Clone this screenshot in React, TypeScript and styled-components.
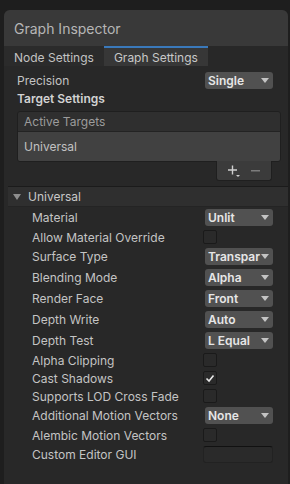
import React from "react";
import styled, { createGlobalStyle } from "styled-components";

const Global = createGlobalStyle`
  html, body {
    margin: 0;
    padding: 0;
    background: #1e1e1e;
    font-family: Inter, "Noto Sans", sans-serif;
  }
`;

const Page = styled.div`
  height: 484px;
  padding: 10px 2px 0 4px;
  box-sizing: border-box;
  overflow: hidden;
`;

const Panel = styled.div`
  height: 474px;
  background: #282828;
  border-radius: 6px 6px 0 0;
  overflow: hidden;
  display: flex;
  flex-direction: column;
`;

const Header = styled.div`
  height: 36px;
  flex: none;
  display: flex;
  align-items: center;
  padding-left: 10px;
  background: #393939;
  color: #b6b6b6;
  font-size: 14px;
`;

const TabBar = styled.div`
  height: 20px;
  flex: none;
  display: flex;
  background: #282828;
`;

const Tab = styled.div<{ $active?: boolean }>`
  display: flex;
  align-items: center;
  padding: 0 10px;
  box-sizing: border-box;
  font-size: 12px;
  color: ${(p) => (p.$active ? "#c8c8c8" : "#c2c2c2")};
  background: ${(p) => (p.$active ? "#373737" : "#2b2b2b")};
  border-top: 2px solid ${(p) => (p.$active ? "#3a79bb" : "transparent")};
`;

const Body = styled.div`
  padding: 5px 0 0 13px;
  display: flex;
  flex-direction: column;
`;

const Row = styled.div<{ $h?: number }>`
  height: ${(p) => p.$h ?? 21}px;
  display: flex;
  align-items: center;
  justify-content: space-between;
  padding-right: 15px;
`;

const Label = styled.span<{ $bold?: boolean }>`
  font-size: 12px;
  color: ${(p) => (p.$bold ? "#d2d2d2" : "#c4c4c4")};
  font-weight: ${(p) => (p.$bold ? 600 : 400)};
  white-space: nowrap;
`;

const SelectBox = styled.div`
  width: 68px;
  height: 17px;
  margin-left: 1px;
  box-sizing: border-box;
  background: #515151;
  border-radius: 3px;
  display: flex;
  align-items: center;
  padding-left: 3px;
  position: relative;
  font-size: 12px;
  font-weight: 600;
  color: #e6e6e6;
`;

const SelectText = styled.span`
  width: 54px;
  overflow: hidden;
  white-space: nowrap;
`;

const Arrow = styled.svg`
  position: absolute;
  right: 4px;
  top: 6px;
`;

const ListBox = styled.div`
  margin-top: 4px;
  width: 264px;
  border: 1px solid #1f1f1f;
  border-radius: 3px;
  box-sizing: border-box;
  overflow: hidden;
`;

const ListHead = styled.div`
  height: 19px;
  display: flex;
  align-items: center;
  padding-left: 6px;
  background: #2f2f2f;
  border-bottom: 1px solid #232323;
  color: #9c9c9c;
  font-size: 12px;
`;

const ListItem = styled.div`
  height: 29px;
  display: flex;
  align-items: center;
  padding-left: 6px;
  background: #414141;
  color: #c2c2c2;
  font-size: 12px;
`;

const ListFooter = styled.div`
  align-self: flex-end;
  margin-right: 9px;
  margin-top: -1px;
  width: 56px;
  height: 20px;
  box-sizing: border-box;
  background: #3b3b3b;
  border: 1px solid #1f1f1f;
  border-top: none;
  border-radius: 0 0 3px 3px;
  display: flex;
  align-items: center;
  justify-content: center;
  gap: 11px;
`;

const FooterWrap = styled.div`
  width: 264px;
  display: flex;
  flex-direction: column;
`;

const Section = styled.div`
  margin-top: 5px;
  margin-left: 4px;
  display: flex;
  flex-direction: column;
`;

const SectionHead = styled.div`
  height: 19px;
  display: flex;
  align-items: center;
  gap: 7px;
  padding-left: 5px;
  background: #2f2f2f;
  border-top: 1px solid #1b1b1b;
  border-bottom: 1px solid #242424;
  color: #c8c8c8;
  font-size: 12px;
`;

const Props = styled.div`
  padding: 0 0 0 24px;
  display: flex;
  flex-direction: column;
`;

const Check = styled.div`
  width: 14px;
  height: 14px;
  box-sizing: border-box;
  background: #2a2a2a;
  border: 1px solid #1a1a1a;
  border-radius: 2px;
  margin-right: 56px;
  display: flex;
  align-items: center;
  justify-content: center;
`;

const TextField = styled.div`
  width: 70px;
  height: 17px;
  box-sizing: border-box;
  background: #2a2a2a;
  border: 1px solid #222;
  border-top-color: #111;
  border-radius: 3px;
`;

const Dropdown = ({ value }: { value: string }) => (
  <SelectBox>
    <SelectText>{value}</SelectText>
    <Arrow width="8" height="5" viewBox="0 0 8 5">
      <path d="M0 0H8L4 5Z" fill="#c4c4c4" />
    </Arrow>
  </SelectBox>
);

const CheckBox = ({ on }: { on?: boolean }) => (
  <Check>
    {on && (
      <svg width="10" height="9" viewBox="0 0 10 9">
        <path d="M1.5 4.5L4 7L8.5 1.5" stroke="#e8e8e8" strokeWidth="1.6" fill="none" />
      </svg>
    )}
  </Check>
);

type Prop =
  | { label: string; kind: "select"; value: string }
  | { label: string; kind: "check"; on?: boolean }
  | { label: string; kind: "text" };

const props: Prop[] = [
  { label: "Material", kind: "select", value: "Unlit" },
  { label: "Allow Material Override", kind: "check" },
  { label: "Surface Type", kind: "select", value: "Transpar" },
  { label: "Blending Mode", kind: "select", value: "Alpha" },
  { label: "Render Face", kind: "select", value: "Front" },
  { label: "Depth Write", kind: "select", value: "Auto" },
  { label: "Depth Test", kind: "select", value: "L Equal" },
  { label: "Alpha Clipping", kind: "check" },
  { label: "Cast Shadows", kind: "check", on: true },
  { label: "Supports LOD Cross Fade", kind: "check" },
  { label: "Additional Motion Vectors", kind: "select", value: "None" },
  { label: "Alembic Motion Vectors", kind: "check" },
  { label: "Custom Editor GUI", kind: "text" },
];

export default function App() {
  return (
    <Page>
      <Global />
      <Panel>
        <Header>Graph Inspector</Header>
        <TabBar>
          <Tab>Node Settings</Tab>
          <Tab $active>Graph Settings</Tab>
        </TabBar>
        <Body>
          <Row $h={19}>
            <Label>Precision</Label>
            <Dropdown value="Single" />
          </Row>
          <Row $h={17}>
            <Label $bold>Target Settings</Label>
          </Row>
          <FooterWrap>
            <ListBox>
              <ListHead>Active Targets</ListHead>
              <ListItem>Universal</ListItem>
            </ListBox>
            <ListFooter>
              <svg width="12" height="12" viewBox="0 0 12 12">
                <path d="M4.5 0.5V9.5M0 5H9" stroke="#d0d0d0" strokeWidth="1.4" />
                <path d="M8 10H12L10 12Z" fill="#d0d0d0" />
              </svg>
              <svg width="9" height="2" viewBox="0 0 9 2">
                <rect width="9" height="1.5" fill="#7c7c7c" />
              </svg>
            </ListFooter>
          </FooterWrap>
        </Body>
        <Section>
          <SectionHead>
            <svg width="8" height="6" viewBox="0 0 8 6">
              <path d="M0 0H8L4 6Z" fill="#8e8e8e" />
            </svg>
            Universal
          </SectionHead>
          <Props>
            {props.map((p) => (
              <Row key={p.label} $h={p.kind === "check" ? 18 : 21}>
                <Label>{p.label}</Label>
                {p.kind === "select" && <Dropdown value={p.value} />}
                {p.kind === "check" && <CheckBox on={p.on} />}
                {p.kind === "text" && <TextField />}
              </Row>
            ))}
          </Props>
        </Section>
      </Panel>
    </Page>
  );
}
